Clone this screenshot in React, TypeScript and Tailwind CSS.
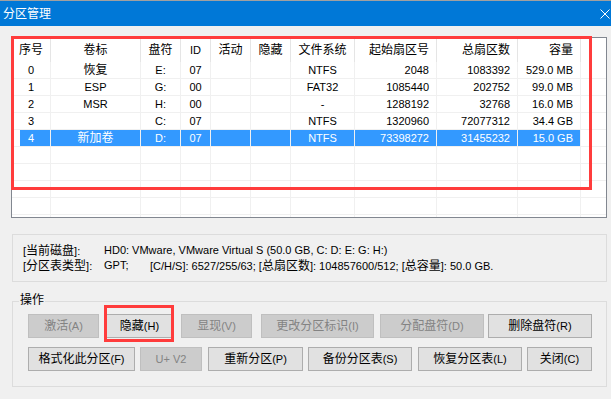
import React from 'react';

const cjk = /([\u2e80-\u9fff\u3000-\u303f\uff00-\uffef]+)/;

// CJK runs are a bit larger than the latin UI font, like the real dialog
const T: React.FC<{ s: string }> = ({ s }) => (
  <>
    {s.split(cjk).map((p, i) =>
      i % 2 ? <span key={i} className="text-[12px]">{p}</span> : <React.Fragment key={i}>{p}</React.Fragment>
    )}
  </>
);

const cols = [
  { label: '序号', w: 'w-[39px]', right: false },
  { label: '卷标', w: 'w-[90px]', right: false },
  { label: '盘符', w: 'w-[40px]', right: false },
  { label: 'ID', w: 'w-[30px]', right: false },
  { label: '活动', w: 'w-[40px]', right: false },
  { label: '隐藏', w: 'w-[40px]', right: false },
  { label: '文件系统', w: 'w-[64px]', right: false },
  { label: '起始扇区号', w: 'w-[82px]', right: true },
  { label: '总扇区数', w: 'w-[81px]', right: true },
  { label: '容量', w: 'w-[63px]', right: true },
];

const rows = [
  ['0', '恢复', 'E:', '07', '', '', 'NTFS', '2048', '1083392', '529.0 MB'],
  ['1', 'ESP', 'G:', '00', '', '', 'FAT32', '1085440', '202752', '99.0 MB'],
  ['2', 'MSR', 'H:', '00', '', '', '-', '1288192', '32768', '16.0 MB'],
  ['3', '', 'C:', '07', '', '', 'NTFS', '1320960', '72077312', '34.4 GB'],
  ['4', '新加卷', 'D:', '07', '', '', 'NTFS', '73398272', '31455232', '15.0 GB'],
  ['', '', '', '', '', '', '', '', '', ''],
  ['', '', '', '', '', '', '', '', '', ''],
  ['', '', '', '', '', '', '', '', '', ''],
  ['', '', '', '', '', '', '', '', '', ''],
  ['', '', '', '', '', '', '', '', '', ''],
];
const selected = 4;

const Btn: React.FC<{ label: string; w: string; disabled?: boolean; className?: string; children?: React.ReactNode }> = ({
  label, w, disabled, className = '', children,
}) => (
  <div
    className={`relative h-[24px] flex items-center justify-center leading-none border ${w} ${className} ${
      disabled ? 'bg-[#cccccc] border-[#bfbfbf] text-[#838383]' : 'bg-[#e1e1e1] border-[#adadad] text-black'
    }`}
  >
    <span><T s={label} /></span>
    {children}
  </div>
);

export default function App() {
  return (
    <div className="w-[611px] h-[399px] overflow-hidden bg-[#f0f0f0] text-[11px] text-black font-['Liberation_Sans','Noto_Sans_CJK_SC',sans-serif]">
      <div className="h-px bg-[#a0a0a0]" />
      {/* Title bar */}
      <div className="h-[25px] bg-[#0078d7] flex items-center justify-between pl-[3px] pr-[1px] text-white">
        <span className="text-[12px] leading-none">分区管理</span>
        <svg width="10" height="10" viewBox="0 0 10 10" className="mt-px">
          <path d="M0.5 0.5 L9.5 9.5 M9.5 0.5 L0.5 9.5" stroke="white" strokeWidth="1" fill="none" />
        </svg>
      </div>

      {/* Partition list */}
      <div className="relative ml-[11px] mt-[11px] w-[596px] h-[181px] border border-[#828790] bg-white overflow-visible">
        <div className="h-full overflow-hidden">
          <div className="flex h-[24px]">
            {cols.map((c) => (
              <div
                key={c.label}
                className={`${c.w} shrink-0 flex items-center border-r border-[#e5e5e5] leading-none ${
                  c.right ? 'justify-end pr-[7px]' : 'justify-center'
                }`}
              >
                <T s={c.label} />
              </div>
            ))}
            <div className="flex-1" />
          </div>
          {rows.map((r, ri) => (
            <div key={ri} className={`flex h-[17px] border-b border-[#f0f0f0] ${ri === selected ? 'text-white' : ''}`}>
              {r.map((v, ci) => (
                <div
                  key={ci}
                  className={`${cols[ci].w} shrink-0 flex items-center border-r border-[#f0f0f0] leading-none ${
                    cols[ci].right ? 'justify-end pr-[7px]' : 'justify-center'
                  } ${
                    ri === selected
                      ? ci === 0
                        ? 'bg-[linear-gradient(to_right,transparent_8px,#3399ff_8px)]'
                        : 'bg-[#3399ff]'
                      : ''
                  }`}
                >
                  <T s={v} />
                </div>
              ))}
              <div className="flex-1" />
            </div>
          ))}
        </div>
        <div className="pointer-events-none absolute left-[-1px] top-[-2px] w-[581px] h-[154px] border-[3px] border-[#ff3c3c]" />
      </div>

      {/* Disk info */}
      <div className="ml-[12px] mt-[16px] w-[595px] h-[48px] border border-[#dcdcdc] pt-[8px] pl-[10px]">
        <div className="flex h-[15px] items-center leading-none">
          <span className="w-[81px]"><T s="[当前磁盘]:" /></span>
          <span>HD0: VMware, VMware Virtual S (50.0 GB, C: D: E: G: H:)</span>
        </div>
        <div className="flex h-[15px] items-center leading-none">
          <span className="w-[81px]"><T s="[分区表类型]:" /></span>
          <span className="w-[46px]">GPT;</span>
          <span><T s="[C/H/S]: 6527/255/63; [总扇区数]: 104857600/512; [总容量]: 50.0 GB." /></span>
        </div>
      </div>

      {/* Operations group */}
      <div className="relative ml-[12px] mt-[19px] w-[595px] h-[86px] border border-[#dcdcdc] pt-[12px] pl-[15px]">
        <span className="absolute left-[6px] top-[-9px] px-px h-[14px] flex items-center bg-[#f0f0f0] text-[12px] leading-none">
          操作
        </span>
        <div className="flex">
          <Btn label="激活(A)" w="w-[71px]" disabled />
          <Btn label="隐藏(H)" w="w-[67px]" className="ml-[7px]">
            <div className="pointer-events-none absolute left-[-3px] top-[-10px] w-[70px] h-[37px] border-[3px] border-[#ff3c3c]" />
          </Btn>
          <Btn label="显现(V)" w="w-[71px]" className="ml-[8px]" disabled />
          <Btn label="更改分区标识(I)" w="w-[113px]" className="ml-[9px]" disabled />
          <Btn label="分配盘符(D)" w="w-[104px]" className="ml-[6px]" disabled />
          <Btn label="删除盘符(R)" w="w-[104px]" className="ml-[4px]" />
        </div>
        <div className="flex mt-[9px]">
          <Btn label="格式化此分区(F)" w="w-[107px]" />
          <Btn label="U+ V2" w="w-[62px]" className="ml-[5px]" disabled />
          <Btn label="重新分区(P)" w="w-[95px]" className="ml-[6px]" />
          <Btn label="备份分区表(S)" w="w-[104px]" className="ml-[5px]" />
          <Btn label="恢复分区表(L)" w="w-[104px]" className="ml-[6px]" />
          <Btn label="关闭(C)" w="w-[65px]" className="ml-[5px]" />
        </div>
      </div>
    </div>
  );
}
